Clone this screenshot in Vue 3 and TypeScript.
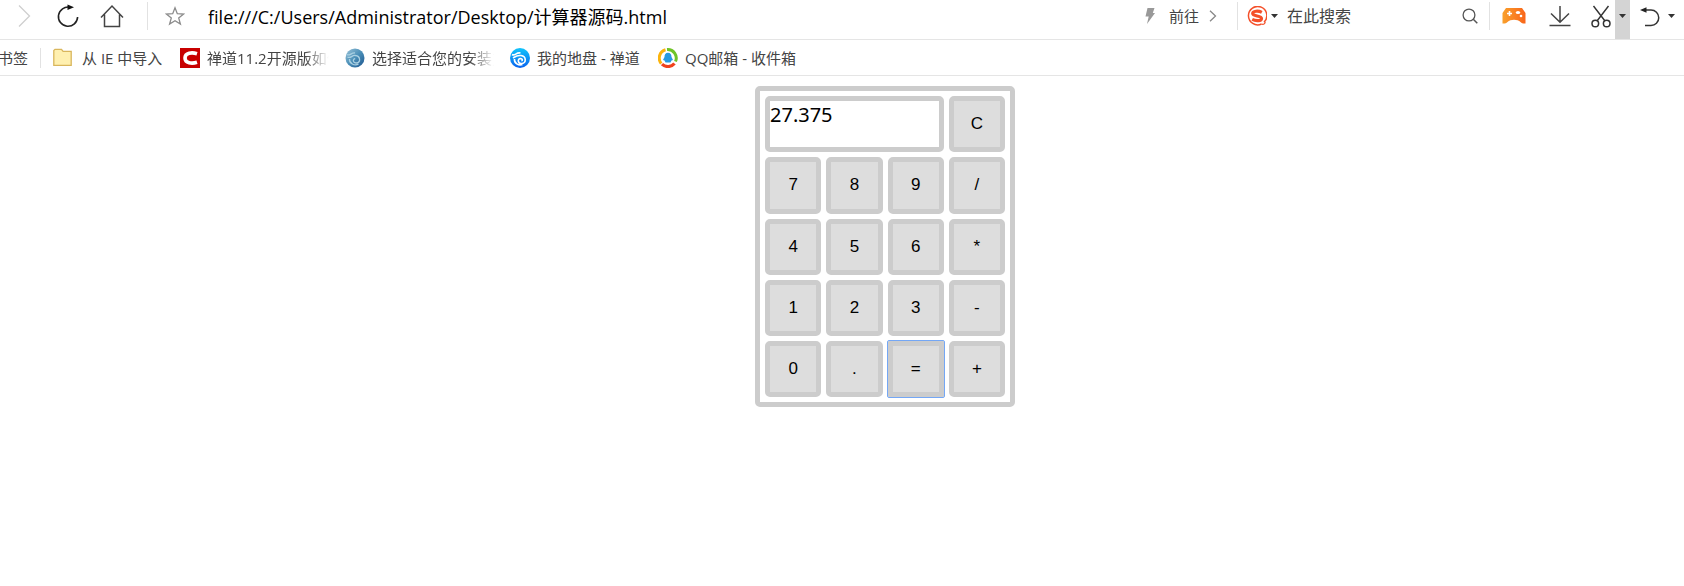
<script setup lang="ts">
import { ref } from 'vue'

const address = ref('file:///C:/Users/Administrator/Desktop/计算器源码.html')
const query = ref('')
const display = ref('27.375')
const keys = ['7', '8', '9', '/', '4', '5', '6', '*', '1', '2', '3', '-', '0', '.', '=', '+']
const active = ref('=')

let stored: number | null = null
let pending = ''
let fresh = true

function compute(a: number, b: number, op: string): number {
  if (op === '+') return a + b
  if (op === '-') return a - b
  if (op === '*') return a * b
  return a / b
}

function press(key: string) {
  active.value = key
  if (key === 'C') {
    display.value = ''
    stored = null
    pending = ''
    fresh = true
  } else if (/[0-9.]/.test(key)) {
    display.value = fresh ? key : display.value + key
    fresh = false
  } else {
    const current = Number(display.value)
    stored = stored !== null && pending ? compute(stored, current, pending) : current
    display.value = String(stored)
    pending = key === '=' ? '' : key
    fresh = true
  }
}
</script>

<template>
  <div class="browser">
    <header class="toolbar">
      <div class="nav">
        <button class="tool forward" aria-label="Forward">
          <svg width="14" height="24" viewBox="0 0 14 24"><path d="M2 1.500 12.500 12 2 22.500" fill="none" stroke="#cfcfcf" stroke-width="1.300" /></svg>
        </button>
        <button class="tool reload" aria-label="Reload">
          <svg width="22" height="24" viewBox="0 0 22 24"><path d="M13 3.300A9.600 9.600 0 1 0 20.600 13" fill="none" stroke="#222" stroke-width="1.600" /><path d="M10.500 .5 17 3.200 10.500 6z" fill="#111" /></svg>
        </button>
        <button class="tool home" aria-label="Home">
          <svg width="24" height="24" viewBox="0 0 24 24"><path d="M1 13.500 12 2l11 11.500M4.500 10.500V22.500h15V10.500" fill="none" stroke="#444" stroke-width="1.500" /></svg>
        </button>
      </div>
      <span class="rule"></span>
      <button class="tool star" aria-label="Bookmark this page">
        <svg width="20" height="20" viewBox="0 0 20 20"><path d="m10 1.800 2.300 5.900 6.300.3-4.900 4 1.700 6.100L10 14.700l-5.400 3.400L6.300 12l-4.900-4 6.300-.3z" fill="none" stroke="#8c8c8c" stroke-width="1.300" /></svg>
      </button>
      <input v-model="address" class="address" aria-label="Address" spellcheck="false" />
      <button class="go">
        <svg width="10" height="18" viewBox="0 0 10 18"><path d="M2.500 1h7L7.800 6H10L2 17 3.700 9.500H.5z" fill="#999" /></svg>
        <span>前往</span>
        <svg width="8" height="12" viewBox="0 0 8 12"><path d="m1 .8 5.500 5.200L1 11.200" fill="none" stroke="#888" stroke-width="1.300" /></svg>
      </button>
      <span class="rule"></span>
      <button class="tool engine" aria-label="Search engine">
        <svg width="20" height="20" viewBox="0 0 20 20"><path d="M17 16.300A9.200 9.200 0 1 0 14.500 18" fill="none" stroke="#f4502a" stroke-width="1.500" /><path d="M14.500 18c2 .8 3.500 0 3.700-2" fill="none" stroke="#f4502a" stroke-width="1.200" /><path d="M14.800 6.300C11.500 4.600 5.700 4.800 5.700 7.500c0 3.200 8.800 1.700 8.800 4.900 0 2.700-5.800 2.800-9.300 1" fill="none" stroke="#f4502a" stroke-width="3.200" /></svg>
        <svg width="7" height="4" viewBox="0 0 7 4"><path d="M0 0h7L3.500 4z" fill="#333" /></svg>
      </button>
      <input v-model="query" class="search" aria-label="在此搜索" placeholder="在此搜索" />
      <button class="tool find" aria-label="Search">
        <svg width="16" height="16" viewBox="0 0 16 16"><circle cx="7" cy="7" r="5.900" fill="none" stroke="#555" stroke-width="1.300" /><path d="m11.300 11.300 4 4" stroke="#555" stroke-width="1.500" /></svg>
      </button>
      <span class="rule"></span>
      <button class="tool games" aria-label="Games">
        <svg width="24" height="18" viewBox="0 0 24 18">
          <defs><linearGradient id="pad" x1="0" x2="1"><stop offset="0" stop-color="#f9a02b" /><stop offset="1" stop-color="#f9651a" /></linearGradient></defs>
          <path d="M4 1h16l3.500 5v10.500c-2 .3-3.500 0-5-1.500-3-3-10-3-13 0-1.500 1.500-3 1.800-5 1.500V6z" fill="url(#pad)" />
          <path d="M7.500 4v5M5 6.500h5" stroke="#fff" stroke-width="1.600" /><ellipse cx="16" cy="5.500" rx="2.200" ry="1.500" fill="#fff" /><circle cx="19" cy="9" r="1.300" fill="#fff" />
        </svg>
      </button>
      <button class="tool download" aria-label="Downloads">
        <svg width="22" height="22" viewBox="0 0 22 22"><path d="M11 1v16.500M2 8.500l9 8.800 9-8.800M.5 20.500h21" fill="none" stroke="#444" stroke-width="1.500" /></svg>
      </button>
      <button class="tool cut" aria-label="Screenshot">
        <svg width="20" height="23" viewBox="0 0 20 23"><path d="M2.500 1 14 16M17.500 1 6 16" fill="none" stroke="#333" stroke-width="1.400" /><circle cx="4.300" cy="18.500" r="3.300" fill="none" stroke="#333" stroke-width="1.500" /><circle cx="15.700" cy="18.500" r="3.300" fill="none" stroke="#333" stroke-width="1.500" /></svg>
      </button>
      <button class="tool cut-menu" aria-label="Screenshot options">
        <svg width="7" height="4" viewBox="0 0 7 4"><path d="M0 0h7L3.500 4z" fill="#333" /></svg>
      </button>
      <button class="tool undo" aria-label="Reopen closed tab">
        <svg width="20" height="21" viewBox="0 0 20 21"><path d="M4 4h7a7.700 7.700 0 0 1 0 15.500H5" fill="none" stroke="#333" stroke-width="1.500" /><path d="M0 4 6.500 1.300v5.400z" fill="#222" /></svg>
        <svg width="7" height="4" viewBox="0 0 7 4"><path d="M0 0h7L3.500 4z" fill="#333" /></svg>
      </button>
    </header>

    <nav class="bookmarks" aria-label="书签">
      <a href="#" class="all">书签</a>
      <span class="rule short"></span>
      <a href="#" class="mark folder">
        <svg width="20" height="20" viewBox="0 0 20 20"><path d="M.8 17.300V2.500L2 1.300h6.500l1.600 2h8.100v14z" fill="#fff0b0" stroke="#d9b65c" stroke-width="1.300" /></svg>
        <span class="label">从 IE 中导入</span>
      </a>
      <a href="#" class="mark wide">
        <svg width="20" height="20" viewBox="0 0 20 20"><path d="M0 0h20v20H0z" fill="#c80000" /><path d="M17 5.700C12 4.200 5 4.600 5 10s7 5.800 12 4.300" fill="none" stroke="#fff" stroke-width="3.600" /></svg>
        <span class="label fade">禅道11.2开源版如何</span>
      </a>
      <a href="#" class="mark wide">
        <svg width="20" height="20" viewBox="0 0 20 20">
          <defs><linearGradient id="dusk" x1="0" y1="0" x2="1" y2="1"><stop offset="0" stop-color="#9cc4d8" /><stop offset=".5" stop-color="#4a8fb8" /><stop offset="1" stop-color="#1c548e" /></linearGradient></defs>
          <circle cx="10" cy="10" r="9.500" fill="url(#dusk)" /><path d="M2 6.500c3 2 4-2 8-1.500M2.500 9c3.500 2 4-2 8-1.500 5 .5 5.500 7 1 7.500-3.500.3-4.300-4-1.300-4.300M4.500 11c-.5 4 5 7.500 9 5" fill="none" stroke="#a9d0e2" stroke-width="1.300" />
        </svg>
        <span class="label fade">选择适合您的安装方式</span>
      </a>
      <a href="#" class="mark medium">
        <svg width="20" height="20" viewBox="0 0 20 20">
          <defs><linearGradient id="wave" x1="0" y1="0" x2="0" y2="1"><stop offset="0" stop-color="#12c5fb" /><stop offset="1" stop-color="#0862ee" /></linearGradient></defs>
          <circle cx="10" cy="10" r="10" fill="url(#wave)" /><path d="M2 6.500c3 2 4-2.500 8.500-1.500M3 10c3-2 4-3 8-2.500 5.500.8 5.500 7.500.8 8-4 .4-4.800-4.800-1.300-5 2 0 2.300 2 1 2.500M4.500 11c-.5 4 4 7 8 5.500" fill="none" stroke="#fff" stroke-width="1.600" />
        </svg>
        <span class="label">我的地盘 - 禅道</span>
      </a>
      <a href="#" class="mark">
        <svg width="20" height="20" viewBox="0 0 20 20">
          <path d="M7.500 1.800A8.500 8.500 0 0 0 3.300 15.500" fill="none" stroke="#fbb40d" stroke-width="3" /><path d="M9 1.600A8.500 8.500 0 0 1 17.500 13.500" fill="none" stroke="#6fc427" stroke-width="3" /><path d="M4 16.200A8.700 8.700 0 0 0 16.500 15.500" fill="none" stroke="#f0421c" stroke-width="3.200" />
          <path d="M10 4.800c2.500 0 3.500 1.900 3.500 4.200l1.500 3-1.500.5-1 2h-5l-1-2L5 12l1.500-3c0-2.300 1-4.200 3.500-4.200z" fill="#279ae0" />
        </svg>
        <span class="label">QQ邮箱 - 收件箱</span>
      </a>
    </nav>

    <main class="page">
      <section class="calculator" aria-label="计算器">
        <output class="display">{{ display }}</output>
        <button class="key" @click="press('C')">C</button>
        <button v-for="key in keys" :key="key" class="key" :class="{ active: active === key }" @click="press(key)">{{ key }}</button>
      </section>
    </main>
  </div>
</template>

<style>
body {
  margin: 0;
  background: #fff;
}
</style>

<style scoped>
.browser {
  overflow: hidden;
  font-family: "Open Sans", "Noto Sans CJK SC", sans-serif;
  color: #444;
}
button,
input {
  margin: 0;
  padding: 0;
  border: 0;
  background: none;
  font: inherit;
  color: inherit;
  outline: none;
}
svg {
  display: block;
  flex: none;
}
.toolbar {
  display: flex;
  align-items: center;
  height: 32px;
  padding-bottom: 7px;
  border-bottom: 1px solid #e5e5e5;
}
.nav {
  display: flex;
  align-items: center;
  padding-left: 17px;
  margin-right: 23px;
}
.tool {
  display: flex;
  align-items: center;
  flex: none;
}
.reload {
  margin: 0 21px 0 26px;
}
.rule {
  flex: none;
  width: 1px;
  height: 28px;
  background: #e2e2e2;
}
.star {
  margin: 0 23px 0 17px;
}
.address {
  flex: 1;
  min-width: 0;
  height: 28px;
  font-size: 18px;
  color: #000;
}
.go {
  display: flex;
  align-items: center;
  font-size: 15px;
  line-height: 22px;
  margin-right: 20px;
}
.go span {
  margin: 0 10px 0 14px;
}
.engine {
  gap: 4px;
  margin: 0 9px;
}
.search {
  width: 175px;
  height: 24px;
  font-size: 16px;
}
.search::placeholder {
  color: #444;
  opacity: 1;
}
.find {
  margin-right: 11px;
}
.games {
  margin: 0 23px 0 12px;
}
.cut {
  margin: 0 4px 0 20px;
}
.cut-menu {
  justify-content: center;
  align-self: stretch;
  width: 15px;
  margin-bottom: -7px;
  padding-bottom: 7px;
  background: #d4d4d4;
}
.undo {
  gap: 8px;
  margin: 0 9px 0 10px;
}
.bookmarks {
  display: flex;
  align-items: center;
  height: 35px;
  border-bottom: 1px solid #e5e5e5;
  font-size: 15px;
  line-height: 22px;
  white-space: nowrap;
}
.bookmarks a {
  color: inherit;
  text-decoration: none;
}
.all {
  margin: 0 12px 0 -2px;
}
.short {
  height: 20px;
  margin-right: 12px;
}
.mark {
  display: flex;
  align-items: center;
  gap: 7px;
  margin-right: 14px;
}
.folder {
  width: 113px;
  gap: 9px;
}
.wide {
  width: 151px;
}
.medium {
  width: 134px;
}
.label {
  min-width: 0;
}
.fade {
  overflow: hidden;
  max-width: 122px;
  mask-image: linear-gradient(90deg, #000 80%, transparent);
}
.page {
  display: flex;
  justify-content: center;
  padding: 10px 0 0 86px;
}
.calculator {
  display: grid;
  grid-template-columns: repeat(4, 1fr);
  gap: 5px;
  box-sizing: border-box;
  width: 260px;
  padding: 5px;
  border: 5px solid #ccc;
  border-radius: 5px;
}
.display {
  grid-column: span 3;
  box-sizing: border-box;
  border: 5px solid #ccc;
  border-radius: 5px;
  font-family: "Noto Sans", sans-serif;
  font-size: 20px;
  line-height: 27px;
  color: #000;
}
.key {
  box-sizing: border-box;
  aspect-ratio: 1;
  border: 5px solid #ccc;
  border-radius: 5px;
  background: #ddd;
  font-family: "Liberation Sans", Arial, sans-serif;
  font-size: 17px;
  color: #000;
}
.key.active {
  outline: 1px solid #74a7f5;
  border-radius: 1px;
}
</style>
